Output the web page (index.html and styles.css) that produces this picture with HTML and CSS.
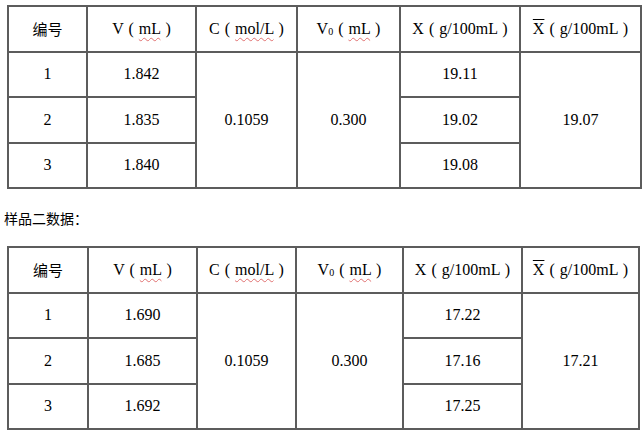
FILE: index.html
```html
<!DOCTYPE html>
<html lang="zh">
<head>
<meta charset="utf-8">
<link rel="stylesheet" href="styles.css">
</head>
<body>
<table class="data t1">
  <colgroup><col class="c1"><col class="c2"><col class="c3"><col class="c4"><col class="c5"><col class="c6"></colgroup>
  <tr>
    <th class="cjk">编号</th>
    <th>V ( <span class="sp">mL</span> )</th>
    <th>C ( <span class="sp">mol/L</span> )</th>
    <th>V<sub>0</sub> ( <span class="sp">mL</span> )</th>
    <th>X ( g/100mL )</th>
    <th><span class="bar">X</span> ( g/100mL )</th>
  </tr>
  <tr><td>1</td><td>1.842</td><td rowspan="3">0.1059</td><td rowspan="3">0.300</td><td>19.11</td><td rowspan="3">19.07</td></tr>
  <tr><td>2</td><td>1.835</td><td>19.02</td></tr>
  <tr><td>3</td><td>1.840</td><td>19.08</td></tr>
</table>
<p class="label">样品二数据：</p>
<table class="data t2">
  <colgroup><col class="c1"><col class="c2"><col class="c3"><col class="c4"><col class="c5"><col class="c6"></colgroup>
  <tr>
    <th class="cjk">编号</th>
    <th>V ( <span class="sp">mL</span> )</th>
    <th>C ( <span class="sp">mol/L</span> )</th>
    <th>V<sub>0</sub> ( <span class="sp">mL</span> )</th>
    <th>X ( g/100mL )</th>
    <th><span class="bar">X</span> ( g/100mL )</th>
  </tr>
  <tr><td>1</td><td>1.690</td><td rowspan="3">0.1059</td><td rowspan="3">0.300</td><td>17.22</td><td rowspan="3">17.21</td></tr>
  <tr><td>2</td><td>1.685</td><td>17.16</td></tr>
  <tr><td>3</td><td>1.692</td><td>17.25</td></tr>
</table>
</body>
</html>
```
FILE: styles.css
```css
html, body {
  margin: 0;
  padding: 0;
  background: #fff;
}
body {
  font-family: "Liberation Serif", "Times New Roman", serif;
  font-size: 16px;
  color: #000;
}
.data {
  border-collapse: collapse;
  table-layout: fixed;
  margin-left: 7px;
}
.t1 {
  margin-top: 5px;
  width: 633px;
}
.t2 {
  width: 631px;
}
.data th, .data td {
  border: 2px solid #5c5c5c;
  text-align: center;
  vertical-align: middle;
  padding: 0;
  font-family: "Liberation Serif", serif;
  font-weight: normal;
  font-size: 16px;
  height: 43.5px;
  white-space: nowrap;
  word-spacing: 1px;
}
.t1 .c1 { width: 79px; }
.t1 .c2 { width: 109px; }
.t1 .c3 { width: 101px; }
.t1 .c4 { width: 103px; }
.t1 .c5 { width: 120px; }
.t1 .c6 { width: 121px; }
.t2 .c1 { width: 80px; }
.t2 .c2 { width: 109px; }
.t2 .c3 { width: 99px; }
.t2 .c4 { width: 107px; }
.t2 .c5 { width: 119px; }
.t2 .c6 { width: 117px; }
.data th.cjk {
  font-family: "Noto Sans CJK SC", sans-serif;
  font-size: 15px;
  word-spacing: 0;
}
.sp {
  text-decoration: underline wavy #e07070;
  text-decoration-thickness: 1px;
  text-underline-offset: 3px;
}
sub {
  font-size: 10px;
  vertical-align: -1px;
}
.bar {
  text-decoration: overline;
  text-decoration-thickness: 1px;
}
.label {
  font-family: "Noto Sans CJK SC", sans-serif;
  font-size: 14px;
  margin: 0;
  padding: 19px 0 18px 4px;
  line-height: 20px;
}
```
